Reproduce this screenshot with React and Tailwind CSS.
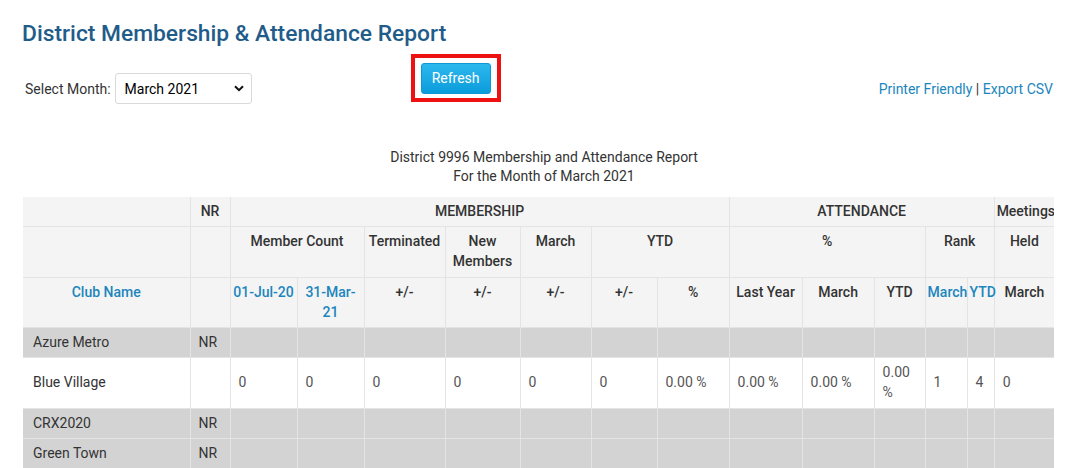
import React from "react";

const cols = [167, 40, 67, 67, 81, 75, 71, 66, 72, 73, 72, 51, 42, 27, 60];

const rows = [
  { name: "Azure Metro", nr: true },
  {
    name: "Blue Village",
    nr: false,
    data: ["0", "0", "0", "0", "0", "0", "0.00 %", "0.00 %", "0.00 %", "0.00 %", "1", "4", "0"],
  },
  { name: "CRX2020", nr: true },
  { name: "Green Town", nr: true },
];

const th = "border border-[#e4e4e4] px-[2px] pt-[4px] align-top text-center font-medium leading-5";
const link = "text-[#1b86bd]";
const td = "border border-[#e4e4e4] px-2 pt-[4px] align-middle leading-5";

export default function App() {
  return (
    <div
      className="min-h-screen bg-white pl-[22px] pr-[12px] pt-[22px] text-[14px] text-[#333]"
      style={{ fontFamily: "Roboto, 'Liberation Sans', sans-serif" }}
    >
      {/* タイトル */}
      <h1 className="text-[22.8px] leading-6 font-medium text-[#1f5c8a]">
        District Membership &amp; Attendance Report
      </h1>

      {/* 操作バー */}
      <div className="mt-2 flex items-start">
        <div className="mt-[19px] flex items-center gap-1 pl-[3px]">
          <span className="leading-5">Select Month:</span>
          <div className="relative">
            <select className="h-[31px] w-[137px] appearance-none rounded-[3px] border border-[#d9d9d9] bg-white pl-[9px] pt-[1px] text-[14px] text-black outline-none">
              <option>March 2021</option>
            </select>
            <svg
              className="pointer-events-none absolute right-[8px] top-[12px]"
              width="10"
              height="7"
              viewBox="0 0 10 7"
            >
              <path d="M1 1.2 5 5.2 9 1.2" fill="none" stroke="#111" strokeWidth="2" />
            </svg>
          </div>
        </div>

        <div className="ml-[159px] border-4 border-[#ee1111] px-[6px] pt-[5px] pb-[4px]">
          <button
            type="button"
            className="h-[31px] w-[70px] rounded-[3px] border border-[#0c98d4] bg-gradient-to-b from-[#2bb8ee] to-[#079cdb] text-[14px] text-white"
          >
            Refresh
          </button>
        </div>

        <div className="ml-auto mr-[13px] mt-[25px] leading-5">
          <span className={link}>Printer Friendly</span>
          <span> | </span>
          <span className={link}>Export CSV</span>
        </div>
      </div>

      {/* レポート見出し */}
      <div className="mt-[44px] text-center leading-[19px]">
        <p>District 9996 Membership and Attendance Report</p>
        <p>For the Month of March 2021</p>
      </div>

      {/* 表 */}
      <div className="mt-[11px] ml-[1px] w-[1031px] overflow-hidden">
        <table className="w-[1031px] table-fixed border-collapse border-hidden">
          <colgroup>
            {cols.map((w, i) => (
              <col key={i} style={{ width: w }} />
            ))}
          </colgroup>
          <thead className="bg-[#f4f4f4]">
            <tr className="[&>th]:pb-[5px]">
              <th className={th}></th>
              <th className={th}>NR</th>
              <th className={th} colSpan={7}>MEMBERSHIP</th>
              <th className={th} colSpan={5}>ATTENDANCE</th>
              <th className={th}>Meetings</th>
            </tr>
            <tr className="[&>th]:pb-[6px]">
              <th className={th}></th>
              <th className={th}></th>
              <th className={th} colSpan={2}>Member Count</th>
              <th className={th}>Terminated</th>
              <th className={th}>New Members</th>
              <th className={th}>March</th>
              <th className={th} colSpan={2}>YTD</th>
              <th className={th} colSpan={3}>%</th>
              <th className={th} colSpan={2}>Rank</th>
              <th className={th}>Held</th>
            </tr>
            <tr className="[&>th]:pb-[5px]">
              <th className={`${th} ${link}`}>Club Name</th>
              <th className={th}></th>
              <th className={`${th} ${link}`}>01-Jul-20</th>
              <th className={`${th} ${link}`}>31-Mar-21</th>
              <th className={th}>+/-</th>
              <th className={th}>+/-</th>
              <th className={th}>+/-</th>
              <th className={th}>+/-</th>
              <th className={th}>%</th>
              <th className={th}>Last Year</th>
              <th className={th}>March</th>
              <th className={th}>YTD</th>
              <th className={`${th} ${link}`}>March</th>
              <th className={`${th} ${link}`}>YTD</th>
              <th className={th}>March</th>
            </tr>
          </thead>
          <tbody>
            {rows.map((r) => (
              <tr
                key={r.name}
                className={r.nr ? "bg-[#d3d3d3] [&>td]:pb-[5px]" : "bg-white [&>td]:pb-[6px]"}
              >
                <td className={`${td} pl-[10px]`}>{r.name}</td>
                <td className={td}>{r.nr ? "NR" : ""}</td>
                {(r.data || Array(13).fill("")).map((v, i) => (
                  <td key={i} className={`${td} text-[#555]`}>
                    {v}
                  </td>
                ))}
              </tr>
            ))}
          </tbody>
        </table>
      </div>
    </div>
  );
}
